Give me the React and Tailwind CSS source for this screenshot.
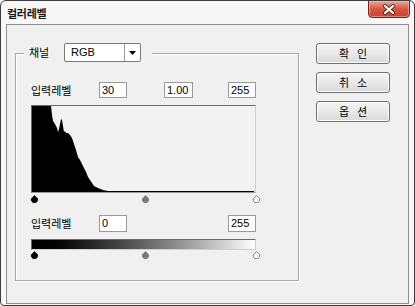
import React from "react";

const kr = "font-['Noto_Sans_CJK_KR',sans-serif]";
const lat = "font-['Liberation_Sans','Noto_Sans_CJK_KR',sans-serif]";

function Pin({ kind }) {
  const fill = kind === "black" ? "#000" : kind === "gray" ? "#7a7a7a" : "#fff";
  const stroke = kind === "white" ? "#6a6a6a" : fill;
  return (
    <svg width="9" height="8" viewBox="0 0 9 8" className="block">
      <path d="M4.5 0.6 L7.6 3.8 A3.2 3.2 0 1 1 1.4 3.8 Z" fill={fill} stroke={stroke} strokeWidth="0.9" />
    </svg>
  );
}

function Field({ value, w }) {
  return (
    <div className={`h-full ${w} border border-[#9a9a9a] bg-white flex items-center pl-[2px] text-[11px] text-black leading-none ${lat}`}>
      {value}
    </div>
  );
}

function Btn({ a, b }) {
  return (
    <div className={`w-[74px] h-[21px] rounded-[3px] border border-[#707070] bg-gradient-to-b from-[#f4f4f4] via-[#e9e9e9] to-[#d9d9d9] shadow-[inset_0_0_0_1px_#fcfcfc] flex items-center justify-center gap-[8px] text-[11px] text-black ${kr}`}>
      <span>{a}</span>
      <span>{b}</span>
    </div>
  );
}

const hist =
  "0,86 0,0 19,0 20,9 21,15 23,18 25,22 26,26 27,23 28,18 29,13 30,14 31,20 32,26 33,25 34,27 36,27 38,29 40,32 42,38 44,44 46,51 48,54 50,58 52,62 54,66 56,71 58,74 60,77 62,80 66,82 71,84 76,85 83,85 222,85 222,86";

export default function App() {
  return (
    <div className="w-[415px] h-[306px] bg-[#f7f7f7] border border-[#3c3c3c] rounded-t-[6px] rounded-b-[4px] flex flex-col overflow-hidden">
      {/* title bar */}
      <div className="h-[23px] shrink-0 flex items-start justify-between pl-[6px] pr-[4px]">
        <div className={`mt-[5px] text-[11px] font-bold text-[#1a1a1a] leading-[14px] tracking-[-0.3px] ${kr}`}>컬러레벨</div>
        <div className="-mt-px w-[42px] h-[18px] rounded-b-[4px] border border-[#6e2418] bg-gradient-to-b from-[#eaa89a] via-[#d4553f] to-[#c9452c] shadow-[inset_0_0_0_1px_rgba(255,200,190,0.5)] flex items-center justify-center">
          <svg width="14" height="11" viewBox="0 0 14 11">
            <path d="M3 2 L11 9 M11 2 L3 9" stroke="#5a2a20" strokeWidth="4" strokeLinecap="round" />
            <path d="M3 2 L11 9 M11 2 L3 9" stroke="#ffffff" strokeWidth="2.2" strokeLinecap="round" />
          </svg>
        </div>
      </div>
      {/* client area */}
      <div className="flex-1 mx-[5px] mb-[1px] border border-[#8e8e8e] bg-[#f0f0f0] flex items-start pl-[8px]">
        {/* group box */}
        <div className="relative mt-[28px] w-[284px] h-[228px] border border-[#a8a8a8] shadow-[1px_1px_0_#ffffff,inset_1px_1px_0_#ffffff]">
          <div className="absolute left-[8px] top-[-11px] bg-[#f0f0f0] flex items-center pl-[5px] pr-[11px] h-[19px]">
            <span className={`text-[11px] text-black leading-none w-[35px] ${kr}`}>채널</span>
            <div className="w-[77px] h-[19px] rounded-[2px] border border-[#7a7a7a] bg-white flex">
              <div className={`flex-1 flex items-center pl-[6px] text-[11px] text-black ${lat}`}>RGB</div>
              <div className="w-[16px] border-l border-[#9a9a9a] flex items-center justify-center">
                <svg width="7" height="4" viewBox="0 0 7 4"><path d="M0 0 H7 L3.5 4 Z" fill="#000" /></svg>
              </div>
            </div>
          </div>
          <div className="pl-[15px] pt-[28px] flex flex-col w-[240px]">
            <div className="h-[16px] flex items-center">
              <span className={`w-[68px] text-[11px] text-black leading-none ${kr}`}>입력레벨</span>
              <Field value="30" w="w-[28px]" />
              <div className="w-[37px]" />
              <Field value="1.00" w="w-[29px]" />
              <div className="w-[35px]" />
              <Field value="255" w="w-[28px]" />
            </div>
            <div className="mt-[7px] w-[225px] h-[88px] border border-t-[#6a6a6a] border-l-[#6a6a6a] border-r-[#cfcfcf] border-b-[#9a9a9a] bg-[#f2f2f2]">
              <svg width="222" height="86" viewBox="0 0 222 86" className="block">
                <polygon points={hist} fill="#000" />
              </svg>
            </div>
            <div className="mt-[2px] -ml-[1px] w-[231px] h-[8px] flex justify-between">
              <Pin kind="black" />
              <Pin kind="gray" />
              <Pin kind="white" />
            </div>
            <div className="mt-[12px] h-[17px] flex items-center">
              <span className={`w-[68px] text-[11px] text-black leading-none ${kr}`}>입력레벨</span>
              <Field value="0" w="w-[28px]" />
              <div className="w-[101px]" />
              <Field value="255" w="w-[28px]" />
            </div>
            <div className="mt-[7px] w-[225px] h-[11px] border border-t-[#6a6a6a] border-l-[#6a6a6a] border-r-[#cfcfcf] border-b-[#cfcfcf] bg-gradient-to-r from-black to-white" />
            <div className="mt-[1px] -ml-[1px] w-[231px] h-[8px] flex justify-between">
              <Pin kind="black" />
              <Pin kind="gray" />
              <Pin kind="white" />
            </div>
          </div>
        </div>
        {/* buttons */}
        <div className="ml-[17px] mt-[18px] flex flex-col gap-[8px]">
          <Btn a="확" b="인" />
          <Btn a="취" b="소" />
          <Btn a="옵" b="션" />
        </div>
      </div>
    </div>
  );
}
